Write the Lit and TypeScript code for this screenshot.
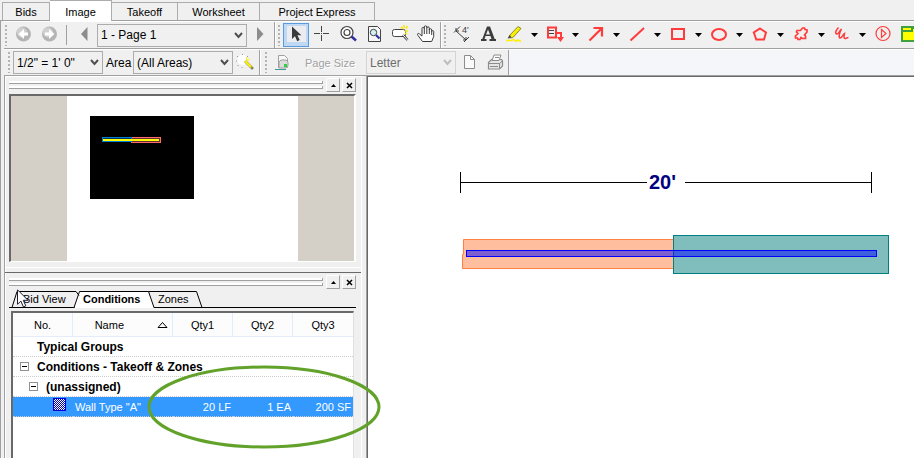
import { LitElement, html, svg, css, nothing, TemplateResult, SVGTemplateResult } from "lit";
import { customElement, property } from "lit/decorators.js";
import { classMap } from "lit/directives/class-map.js";

const RED = "#ff3b3b";

/* Toolbar glyphs, each drawn on a 26 x 24 field */
const glyphs: Record<string, SVGTemplateResult> = {
  back: svg`<circle cx="13.500" cy="11" r="7.500" fill="#b4b4b4"/><circle cx="12" cy="9.500" r="5" fill="#d0d0d0"/>
    <path d="M18 9.500v3h-4v3.500L8.500 11 14 6v3.500z" fill="#fff"/>`,
  forward: svg`<circle cx="13.500" cy="11" r="7.500" fill="#b4b4b4"/><circle cx="12" cy="9.500" r="5" fill="#d0d0d0"/>
    <path d="M9 9.500v3h4v3.500l5.500-5L13 6v3.500z" fill="#fff"/>`,
  prev: svg`<path d="M16.500 4v14L10 11z" fill="#8c8c8c"/>`,
  next: svg`<path d="M10 4v14l6.500-7z" fill="#8c8c8c"/>`,
  pointer: svg`<rect x="4" y="3" width="19" height="16" fill="#ececf0"/>
    <path d="M9 3.500v12.500l3-2.800 2.200 5 2.500-1.200-2.300-4.700h4z" fill="#3a3a3a"/>`,
  cross: svg`<path d="M12.500 3v6M12.500 12v6M5 10.500h6M14 10.500h6" stroke="#444" fill="none"/><path d="M12 10h1v1h-1z" fill="#444"/>`,
  zoom: svg`<circle cx="12" cy="9.500" r="6" fill="#fff" stroke="#444" stroke-width="1.200"/><circle cx="12" cy="9.500" r="3" fill="none" stroke="#444" stroke-width="1.200"/>
    <path d="M16.500 13.500l4.500 4" stroke="#3030a0" stroke-width="2.500"/>`,
  zoompage: svg`<path d="M7.500 3.500h9l3 3v12h-12z" fill="#f6f6f6" stroke="#444"/><circle cx="12.500" cy="9.500" r="3.200" fill="#d4f0f4" stroke="#444"/>
    <path d="M15 12l3.500 3.500" stroke="#3030a0" stroke-width="2.200"/>`,
  newview: svg`<rect x="5.500" y="6.500" width="13" height="7" rx="2" fill="#fff" stroke="#444"/>
    <path d="M16 12l4.500 5" stroke="#444" stroke-width="2.600"/><path d="M16 12l4.500 5" stroke="#fff"/>
    <path d="M14 4l2 2M17 2v3M20.500 3l-1.500 2.500M21 8h-3M20 11l-2-1" stroke="#f8e800" stroke-width="1.500"/>`,
  hand: svg`<path d="M9.500 18.500l-4.500-6c-1.300-1.800.2-2.700 1.500-1.500L9 13V5.500c0-1.600 2.300-1.600 2.300 0V4c0-1.600 2.500-1.600 2.500 0v1c0-1.600 2.500-1.600 2.500 0v2c0-1.600 2.400-1.600 2.400 0v1.500c0-1.200 2-1.200 2 0v5l-2 5z" fill="#fff" stroke="#3c3c3c"/>
    <path d="M11.300 5v6M13.800 5v6M16.300 6v5M18.700 8v4" stroke="#3c3c3c"/>`,
  dimension: svg`<path d="M7 8l10 9M5 9.500l6-6M15 19l5-5M7 5v3h3M17 14v3h-3" fill="none" stroke="#3c3c3c"/>
    <text x="13" y="10" font-family="Liberation Sans, sans-serif" font-size="9" fill="#3c3c3c">4'</text>`,
  text: svg`<path d="M12 3.500h3l4.700 12.500H21v2h-6.500v-2h2l-1-3h-5l-1 3h2v2H6v-2h1.300zM13 6.500l-2 5h4z" fill="#3c3c3c"/>`,
  highlight: svg`<path d="M17 3.500l3 2L12 14.500l-3.500.5.500-3z" fill="#f8f000" stroke="#8a8a30"/><path d="M8.500 12l-2 3.500 4-1" fill="#444"/>
    <path d="M5 17.500h5l3-1 2 2 2-1.500 3 1.500" fill="none" stroke="#fff000" stroke-width="1.500"/>`,
  note: svg`<path d="M6 4.500h8v10H6z" fill="#f0f0f0" stroke="${RED}" stroke-width="2"/><path d="M7 7.500h5M7 10.500h5" stroke="#444"/>
    <path d="M14 10h5v6" fill="none" stroke="${RED}" stroke-width="2"/><path d="M15 14h7l-3.500 5z" fill="${RED}"/>`,
  arrow: svg`<path d="M6.500 17.500L18 6M10.500 5H19v8.500" fill="none" stroke="${RED}" stroke-width="2.200"/>`,
  line: svg`<path d="M6.500 17.500L20 5" stroke="${RED}" stroke-width="2"/>`,
  rect: svg`<rect x="7" y="6" width="12" height="10" fill="none" stroke="${RED}" stroke-width="2"/>`,
  oval: svg`<ellipse cx="13" cy="11.500" rx="7" ry="5.500" fill="none" stroke="${RED}" stroke-width="2"/>`,
  polygon: svg`<path d="M13 5.500l6 4-2 7H9.300l-2.500-7z" fill="none" stroke="${RED}" stroke-width="2"/>`,
  cloud: svg`<path d="M9 7.500h3.500l2-2.500h2l.5 1.500 2 .5v2l-2.500 3 1 1v2.500h-3l-1.500-1-1 2H10l-.5-1.500H7.500v-2L10 10.500 8.500 9z" fill="none" stroke="${RED}" stroke-width="1.700"/>`,
  scribble: svg`<path d="M9.500 4.500c-2 2-4 5.500-2 6.500 2.500.5 3-3.500 5-5-1.500 2.500-3.500 8-1.500 9 2 .5 3-4 4.500-4.500-.5 2-1 5 .5 5 1.500 0 1.500-1 3.500-1" fill="none" stroke="${RED}" stroke-width="1.500"/>`,
  play: svg`<circle cx="13" cy="10.500" r="7" fill="none" stroke="${RED}" stroke-width="1.200"/><path d="M11.500 6.500l4.500 4-4.500 4z" fill="none" stroke="${RED}" stroke-width="1.200"/>`,
  sheet: svg`<path d="M5 3h21v16H5z" fill="#40a040"/><path d="M7 5h8v2H7zM7 9h10V6h9v11H7z" fill="#ff0"/>`,
  wand: svg`<circle cx="9.500" cy="9" r="5" fill="#fff"/><path d="M9.500 3v1M15 5l-1 1M4 5l1 1M3 10h1M4.500 15l1-1M9 16v1" stroke="#999"/>
    <path d="M12 10l8 8" stroke="#8a8a60" stroke-width="2.600"/><path d="M12 10l6 6" stroke="#fff400" stroke-width="2"/><path d="M13.500 6v3h3" stroke="#fff000" fill="none"/>`,
  setup: svg`<path d="M8.500 4.500h6l3 3v9h-9z" fill="#f8f8f8" stroke="#a0a0a0"/><path d="M5 18.500h11" fill="none" stroke="#3a9a9a"/>
    <path d="M9 11l2-2h5l2 2v4l-2 2H9z" fill="#dcdcdc" stroke="#a0a0a0"/><path d="M14 13h3v3h-3z" fill="#30d040"/>`,
  page: svg`<path d="M8.500 4.500h6l4 4v9h-10z" fill="#fafafa" stroke="#8c8c8c"/><path d="M14.500 4.500v4h4" fill="none" stroke="#8c8c8c"/>`,
  printer: svg`<path d="M6.500 11.500l3-3h10l1 1.500v5l-3 3h-11z" fill="#e6e6e6" stroke="#8c8c8c" stroke-width="1.200"/>
    <path d="M10 9.500l2-5.500h7l-2 5.500z" fill="#fafafa" stroke="#8c8c8c"/><path d="M13 6.500h4M7 12.500h10.500v5M17.500 12.500l3-2.500M8 15.500h8" fill="none" stroke="#8c8c8c"/>`,
};

const glyph = (name: string) =>
  html`<svg class="glyph" viewBox="0 0 26 24" aria-hidden="true">${glyphs[name]}</svg>`;

const toolCss = css`
  * { box-sizing: border-box; }
  .glyph { display: block; width: 26px; height: 24px; }
  button { padding: 0; margin: 0; border: 0; background: none; font: inherit; color: inherit; }
`;

@customElement("tool-button")
class ToolButton extends LitElement {
  @property() icon = "";
  @property() label = "";
  @property({ type: Boolean }) pressed = false;
  @property({ type: Boolean }) menu = false;

  static styles = [toolCss, css`
    :host { display: flex; flex: none; align-items: center; }
    .tool { width: 26px; height: 24px; }
    .on { box-shadow: inset 0 0 0 1px #5a9be0; background: #bfd9f5; }
    .drop { display: grid; place-items: center; width: 15px; height: 22px; }
  `];

  render() {
    return html`
      <button class=${classMap({ tool: true, on: this.pressed })} aria-label=${this.label}>${glyph(this.icon)}</button>
      ${this.menu
        ? html`<button class="drop" aria-label="${this.label} options">
            <svg width="7" height="4" viewBox="0 0 7 4"><path d="M0 0h7L3.500 4z"/></svg>
          </button>`
        : nothing}
    `;
  }
}

@customElement("drop-list")
class DropList extends LitElement {
  @property() value = "";
  @property() label = "";
  @property({ type: Boolean }) off = false;

  static styles = css`
    :host { display: grid; height: 23px; flex: none; align-items: center; }
    select, svg { grid-area: 1 / 1; }
    select {
      appearance: none; width: 100%; height: 23px; box-sizing: border-box; margin: 0; padding: 0 16px 0 3px;
      border: 1px solid #acacac; border-radius: 0; background: #f0f0f0; color: #000;
      font: 12px "Liberation Sans", Arial, sans-serif;
    }
    select:disabled { border-color: #d4d4d4; color: #6d6d6d; opacity: 1; }
    svg { justify-self: end; margin-right: 4px; pointer-events: none; }
    .arrow { fill: none; stroke: #505050; stroke-width: 2; }
    .dim { stroke: #bdbdbd; }
  `;

  render() {
    return html`
      <select aria-label=${this.label} ?disabled=${this.off}><option>${this.value}</option></select>
      <svg width="9" height="7" viewBox="0 0 9 7"><path class=${classMap({ arrow: true, dim: this.off })} d="M1 1l3.500 4L8 1"/></svg>
    `;
  }
}

@customElement("pane-bar")
class PaneBar extends LitElement {
  static styles = [toolCss, css`
    :host { display: flex; height: 14px; gap: 2px; }
    .grips { flex: 1; display: flex; flex-direction: column; justify-content: center; gap: 2px; margin-right: 1px; }
    .grip { height: 3px; background: #fff; border: solid #a0a0a0; border-width: 0 1px 1px 0; }
    button {
      display: grid; place-items: center; width: 14px; height: 14px;
      border: 1px solid #a0a0a0; border-top-color: #fff; border-left-color: #fff;
    }
  `];

  render() {
    return html`
      <div class="grips"><div class="grip"></div><div class="grip"></div></div>
      <button aria-label="Collapse"><svg width="5" height="3" viewBox="0 0 5 3"><path d="M0 3L2.500 0 5 3z"/></svg></button>
      <button aria-label="Close"><svg width="7" height="7" viewBox="0 0 7 7"><path d="M1 1l5 5M6 1L1 6" stroke="#000" stroke-width="1.500"/></svg></button>
    `;
  }
}

interface Tool { icon: string; label: string; menu?: boolean; pressed?: boolean }

const viewTools: Tool[] = [
  { icon: "pointer", label: "Select", pressed: true },
  { icon: "cross", label: "Crosshair" },
  { icon: "zoom", label: "Zoom" },
  { icon: "zoompage", label: "Zoom to page" },
  { icon: "newview", label: "New view" },
  { icon: "hand", label: "Pan" },
];

const markTools: Tool[] = [
  { icon: "dimension", label: "Dimension" },
  { icon: "text", label: "Text" },
  { icon: "highlight", label: "Highlight", menu: true },
  { icon: "note", label: "Note", menu: true },
  { icon: "arrow", label: "Arrow", menu: true },
  { icon: "line", label: "Line", menu: true },
  { icon: "rect", label: "Rectangle", menu: true },
  { icon: "oval", label: "Ellipse", menu: true },
  { icon: "polygon", label: "Polygon", menu: true },
  { icon: "cloud", label: "Cloud", menu: true },
  { icon: "scribble", label: "Freehand", menu: true },
  { icon: "play", label: "Play" },
  { icon: "sheet", label: "Sheet" },
];

@customElement("app-root")
class AppRoot extends LitElement {
  static styles = [toolCss, css`
    :host {
      display: flex; flex-direction: column; min-height: 100vh; overflow: hidden;
      background: #f0f0f0; color: #000; font: 11px "Liberation Sans", Arial, sans-serif;
    }
    .pages { display: flex; align-items: flex-end; height: 21px; padding-left: 2px; border-bottom: 1px solid #a0a0a0; flex: none; }
    .pages button { height: 18px; border: solid #acacac; border-width: 1px 1px 0 0; white-space: nowrap; }
    .pages .bids { width: 48px; border-left-width: 1px; }
    .pages .image { width: 62px; height: 21px; margin-bottom: -1px; padding-top: 2px; background: #fff; }
    .pages .takeoff { width: 66px; }
    .pages .worksheet { width: 82px; }
    .pages .express { width: 115px; }

    .frame { flex: 1; display: flex; flex-direction: column; padding-left: 3px; border-left: 1px solid #a0a0a0; }
    .bar { display: flex; border-top: 1px solid #fff; border-bottom: 1px solid #a0a0a0; overflow: hidden; flex: none; }
    .top { height: 28px; }
    .low { height: 27px; background: #f4f6f9; }
    .group { display: flex; align-items: center; flex: none; background: #f0f0f0; border-right: 1px solid #a0a0a0; }
    .top .group { padding-right: 1px; }
    .group + .group { border-left: 1px solid #fff; }
    .group:last-child { border-right: 0; }
    .low .group:last-child { border-right: 1px solid #a0a0a0; }
    .grip { width: 2px; height: 21px; margin: 0 3px 0 1px; background: repeating-linear-gradient(#b4b4b4 0 2px, #f0f0f0 2px 4px); }
    .low .grip { margin: 0 3px 0 4px; }
    .top .group + .group .grip { margin-left: 2px; }
    .rule { width: 1px; height: 20px; margin: 0 4px; background: #a0a0a0; }
    .w150 { width: 150px; }
    .w100 { width: 100px; }
    .w90 { width: 90px; }
    .caption { font-size: 12px; padding: 0 3px; width: 30px; }
    .faint { font-size: 11px; width: 70px; padding-left: 9px; color: #a0a0a0; text-shadow: 1px 1px #fff; white-space: nowrap; }

    .work { flex: 1; display: flex; position: relative; }
    .side {
      flex: none; width: 358px; display: flex; flex-direction: column;
      border: solid #a0a0a0; border-width: 0 0 0 1px; box-shadow: inset 1px 1px #fff, inset -1px 0 #fff;
    }
    .pane { padding: 2px 6px 0 4px; }
    .preview {
      display: flex; justify-content: center; height: 168px; margin-top: 2px; background: #d4d0c8;
      border: solid; border-width: 2px 2px 1px 2px; border-color: #696969 #fff #fff #696969;
    }
    .paper { width: 231px; height: 165px; background: #fff; }
    .split { height: 6px; margin: 5px 1px 0 0; border-top: 1px solid #fff; border-bottom: 1px solid #696969; }
    .list { flex: 1; display: flex; flex-direction: column; }
    .tabs { position: relative; display: flex; height: 17px; margin-top: 2px; border-bottom: 1px solid #000; }
    .outline { position: absolute; left: 0; top: 0; width: 200px; height: 17px; }
    .tabs button { position: relative; height: 16px; text-align: left; }
    .bidview { width: 74px; padding-left: 14px; }
    .conditions { width: 75px; font-weight: bold; }
    .arrowhead { position: absolute; left: 8px; top: -2px; width: 12px; height: 19px; }
    .sheet {
      flex: 1; margin: 3px 2px 0 2px; background: #fff;
      border: solid; border-width: 2px 1px 0 2px; border-color: #696969 #e0e0e0 #fff #696969;
    }
    table { width: 100%; table-layout: fixed; border-collapse: separate; border-spacing: 0; }
    th, td { padding: 0; font-weight: normal; white-space: nowrap; }
    th { height: 24px; background: #fcfcfc; border: solid #e2ecfa; border-width: 0 1px 1px 0; }
    th:last-child { border-right: 0; }
    .c-no { width: 60px; }
    .c-name { width: 100px; }
    td { height: 20px; border-bottom: 1px dotted #ccc; }
    .name { display: flex; justify-content: flex-end; align-items: center; gap: 33px; padding-right: 4px; }
    .label { display: flex; align-items: center; gap: 8px; font-size: 12px; font-weight: bold; }
    .d0 { padding-left: 24px; }
    .d1 { padding-left: 7px; }
    .d2 { padding-left: 16px; }
    .toggle { display: grid; place-items: center; width: 9px; height: 9px; border: 1px solid #919191; background: #fff; }
    .toggle svg { display: block; }
    .picked td { background: #3399ff; color: #fff; text-align: right; padding-right: 2px; }
    .picked .item { text-align: left; padding-left: 2px; }
    .swatch { display: block; width: 13px; height: 13px; margin: 0 5px 4px auto; }

    .canvas {
      flex: 1; margin-left: 5px; background: #fff; overflow: hidden;
      border: solid #696969; border-width: 1px 0 0 1px; outline: 1px solid #a0a0a0;
    }
    .drawing { display: block; width: 546px; height: 380px; }
    .measure { font: bold 20px "Liberation Sans", Arial, sans-serif; fill: #000080; }
    .ring { position: absolute; left: 142px; top: 288px; width: 238px; height: 86px; pointer-events: none; }
  `];

  private tools(list: Tool[]): TemplateResult[] {
    return list.map(t => html`<tool-button icon=${t.icon} label=${t.label} ?menu=${!!t.menu} ?pressed=${!!t.pressed}></tool-button>`);
  }

  private toggle() {
    return html`<button class="toggle" aria-label="Collapse group"><svg width="5" height="1"><rect width="5" height="1"/></svg></button>`;
  }

  render() {
    return html`
      <nav class="pages">
        <button class="bids">Bids</button><button class="image">Image</button><button class="takeoff">Takeoff</button
        ><button class="worksheet">Worksheet</button><button class="express">Project Express</button>
      </nav>
      <div class="frame">
        <div class="bar top">
          <div class="group">
            <i class="grip"></i>
            <tool-button icon="back" label="Back"></tool-button>
            <tool-button icon="forward" label="Forward"></tool-button>
            <i class="rule"></i>
            <tool-button icon="prev" label="Previous page"></tool-button>
            <drop-list class="w150" label="Page" value="1 - Page 1"></drop-list>
            <tool-button icon="next" label="Next page"></tool-button>
          </div>
          <div class="group"><i class="grip"></i>${this.tools(viewTools)}</div>
          <div class="group"><i class="grip"></i>${this.tools(markTools)}</div>
        </div>
        <div class="bar low">
          <div class="group">
            <i class="grip"></i>
            <drop-list class="w90" label="Scale" value="1/2&quot; = 1' 0&quot;"></drop-list>
            <span class="caption">Area</span>
            <drop-list class="w100" label="Area" value="(All Areas)"></drop-list>
            <tool-button icon="wand" label="Area wizard"></tool-button>
          </div>
          <div class="group">
            <i class="grip"></i>
            <tool-button icon="setup" label="Page setup"></tool-button>
            <span class="faint">Page Size</span>
            <drop-list class="w90" label="Page Size" value="Letter" off></drop-list>
            <tool-button icon="page" label="New page"></tool-button>
            <tool-button icon="printer" label="Print"></tool-button>
          </div>
        </div>

        <div class="work">
          <aside class="side">
            <section class="pane">
              <pane-bar></pane-bar>
              <div class="preview">
                <svg class="paper" viewBox="0 0 231 165" shape-rendering="crispEdges">
                  <rect x="23" y="20" width="104" height="83"/>
                  <rect x="64.500" y="41.500" width="29" height="5" fill="#603030" stroke="#ff6b6b"/>
                  <rect x="35.500" y="41.500" width="29" height="4" fill="#003060" stroke="#0080d0"/>
                  <rect x="36" y="43" width="56" height="2" fill="#ff0"/>
                </svg>
              </div>
            </section>
            <div class="split"></div>
            <section class="pane list">
              <pane-bar></pane-bar>
              <div class="tabs">
                <svg class="outline" viewBox="0 0 200 17">
                  <path d="M65.500 17l5-16.500h69l5.500 16.500z" fill="#fff"/>
                  <path d="M3 16.500l5-16H67l3 4M65 16.500l5.500-16H139.500l5.500 16M139.500.5H187.500l5.500 16" fill="none" stroke="#000"/>
                </svg>
                <button class="bidview">Bid View</button>
                <button class="conditions">Conditions</button>
                <button>Zones</button>
                <svg class="arrowhead" viewBox="0 0 12 19"><path d="M.5.800v14.500l3.400-3.200 2.500 5.800 2.400-1-2.500-5.600H11z" fill="#fff" stroke="#202030"/></svg>
              </div>
              <div class="sheet">
                <table>
                  <colgroup><col class="c-no"><col class="c-name"><col><col><col></colgroup>
                  <thead>
                    <tr>
                      <th>No.</th>
                      <th><div class="name">Name<svg width="11" height="6" viewBox="0 0 11 6"><path d="M1 5.500L5.500.5l4.500 5z" fill="#fff" stroke="#000"/></svg></div></th>
                      <th>Qty1</th><th>Qty2</th><th>Qty3</th>
                    </tr>
                  </thead>
                  <tbody>
                    <tr><td colspan="5"><div class="label d0">Typical Groups</div></td></tr>
                    <tr><td colspan="5"><div class="label d1">${this.toggle()}Conditions - Takeoff &amp; Zones</div></td></tr>
                    <tr><td colspan="5"><div class="label d2">${this.toggle()}(unassigned)</div></td></tr>
                    <tr class="picked">
                      <td><svg class="swatch" viewBox="0 0 13 13" shape-rendering="crispEdges">
                        <defs><pattern id="mesh" width="2" height="2" patternUnits="userSpaceOnUse"><rect width="2" height="2" fill="#fff"/><path d="M0 0h1v1H0zM1 1h1v1H1z" fill="#0000c0"/></pattern></defs>
                        <rect x=".5" y=".5" width="12" height="12" fill="url(#mesh)" stroke="#0000e0"/></svg></td>
                      <td class="item">Wall Type "A"</td><td>20 LF</td><td>1 EA</td><td>200 SF</td>
                    </tr>
                  </tbody>
                </table>
              </div>
            </section>
          </aside>
          <main class="canvas">
            <svg class="drawing" viewBox="0 0 546 380">
              <path d="M92.500 95v21M503.500 95v21M93 105.500h186M317 105.500h186" stroke="#000" fill="none"/>
              <text class="measure" x="281" y="112">20'</text>
              <path d="M95.500 162.500H305.500v29H94.500v-14h1z" fill="#ffbe9e" stroke="#ff8040"/>
              <rect x="305.500" y="158.500" width="215" height="38" fill="#80bebe" stroke="#008080"/>
              <rect x="98.500" y="173.500" width="410" height="6" fill="#00f" fill-opacity=".5" stroke="#00f"/>
            </svg>
          </main>
          <svg class="ring" viewBox="0 0 238 86"><ellipse cx="118" cy="43" rx="115" ry="40" fill="none" stroke="#62a22a" stroke-width="3"/></svg>
        </div>
      </div>
    `;
  }
}
